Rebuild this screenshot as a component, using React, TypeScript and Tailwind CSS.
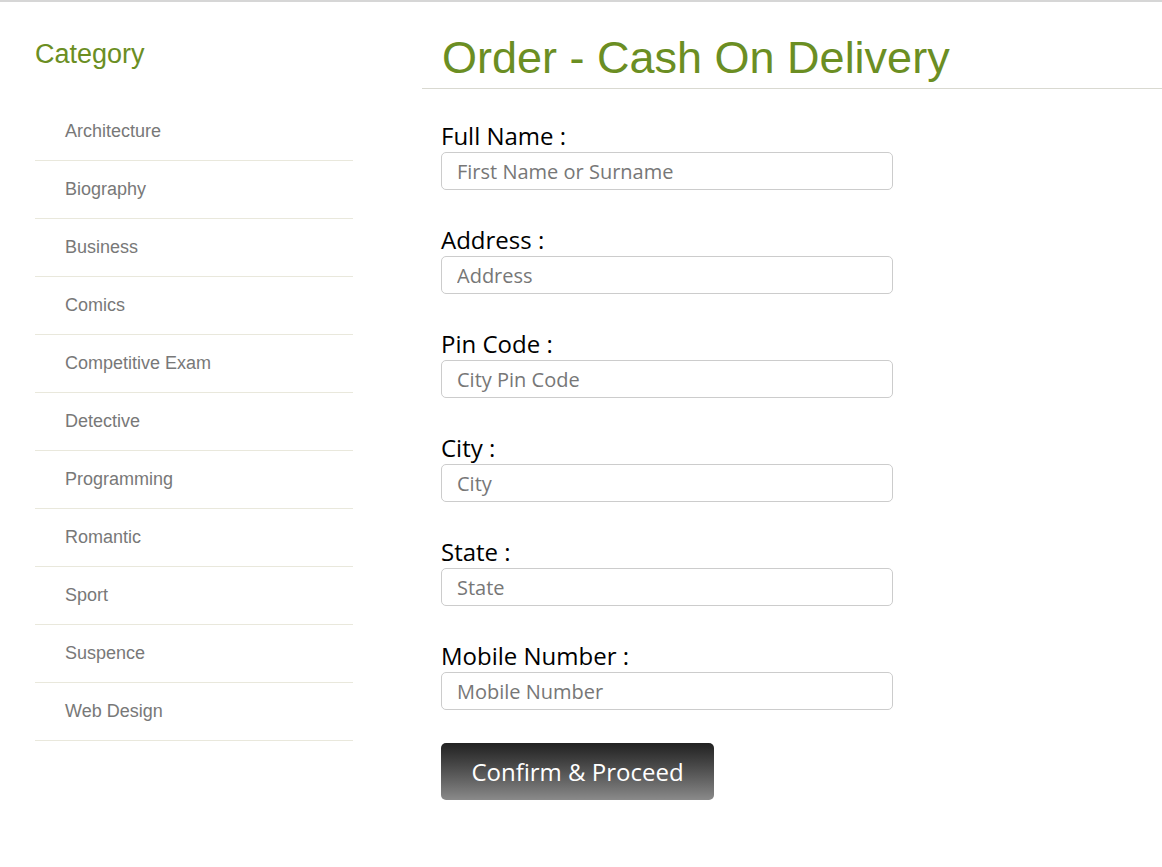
import React from "react";

const categories = [
  "Architecture",
  "Biography",
  "Business",
  "Comics",
  "Competitive Exam",
  "Detective",
  "Programming",
  "Romantic",
  "Sport",
  "Suspence",
  "Web Design",
];

const fields = [
  { label: "Full Name :", placeholder: "First Name or Surname" },
  { label: "Address :", placeholder: "Address" },
  { label: "Pin Code :", placeholder: "City Pin Code" },
  { label: "City :", placeholder: "City" },
  { label: "State :", placeholder: "State" },
  { label: "Mobile Number :", placeholder: "Mobile Number" },
];

export default function App() {
  return (
    <div className="min-h-[867px] bg-white border-t-2 border-[#d6d6d6]">
      <div className="flex">
        {/* sidebar */}
        <aside className="ml-[35px] w-[318px] pt-[37px] font-['Liberation_Sans',Arial,sans-serif]">
          <h3 className="text-[27px] leading-[31px] text-[#6b8e23]">Category</h3>
          <ul className="mt-[33px]">
            {categories.map((c) => (
              <li
                key={c}
                className="border-b border-[#e9e8dc] py-[18px] pl-[30px] text-[18px] leading-[21px] text-[#787878]"
              >
                {c}
              </li>
            ))}
          </ul>
        </aside>

        {/* main */}
        <main className="ml-[69px] flex-1">
          <h1 className="mt-[30px] border-b border-[#d9d9d1] pl-5 pb-1 font-['Liberation_Sans',Arial,sans-serif] text-[45px] leading-[52px] text-[#6b8e23]">
            Order - Cash On Delivery
          </h1>

          <form className="mt-[30px] pl-[19px] font-['Open_Sans',sans-serif]">
            {fields.map((f) => (
              <div key={f.label} className="mb-[33px]">
                <label className="block text-[24px] leading-[33px] text-black">
                  {f.label}
                </label>
                <input
                  type="text"
                  placeholder={f.placeholder}
                  className="block h-[38px] w-[452px] rounded-[5px] border border-[#cccccc] px-[15px] text-[20px] text-black placeholder:text-[#777777] outline-none"
                />
              </div>
            ))}
            <button
              type="button"
              className="h-[57px] w-[273px] rounded-[5px] bg-linear-to-b from-[#222222] to-[#8a8a8a] text-[24px] text-white"
            >
              Confirm &amp; Proceed
            </button>
          </form>
        </main>
      </div>
    </div>
  );
}
